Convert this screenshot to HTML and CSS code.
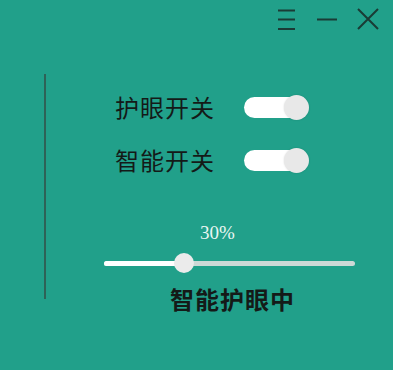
FILE: index.html
```html
<!DOCTYPE html>
<html lang="zh">
<head>
    <meta charset="UTF-8">
    <meta name="viewport" content="width=device-width, initial-scale=1.0">
    <title>护眼</title>
    <link rel="stylesheet" href="styles.css">
</head>
<body>
<div class="window">
    <div class="titlebar">
        <svg class="tb-icon" width="22" height="24" viewBox="0 0 22 24">
            <path d="M2 3.5H19M2 12.5H19M2 22H19" stroke="#1a3b35" stroke-width="2" fill="none"/>
        </svg>
        <svg class="tb-icon" width="22" height="24" viewBox="0 0 22 24">
            <path d="M1 12.5H21" stroke="#1a3b35" stroke-width="2" fill="none"/>
        </svg>
        <svg class="tb-icon" width="24" height="24" viewBox="0 0 24 24">
            <path d="M2 2L22 22M22 2L2 22" stroke="#1a3b35" stroke-width="2" fill="none"/>
        </svg>
    </div>

    <div class="main">
        <div class="divider"></div>
        <div class="content">
            <div class="row">
                <span class="label">护眼开关</span>
                <div class="switch on"><span class="knob"></span></div>
            </div>
            <div class="row">
                <span class="label">智能开关</span>
                <div class="switch on"><span class="knob"></span></div>
            </div>

            <div class="value">30%</div>
            <div class="slider">
                <div class="fill" style="width: 32%"></div>
                <span class="thumb" style="left: 32%"></span>
            </div>
            <div class="status">智能护眼中</div>
        </div>
    </div>
</div>
</body>
</html>
```

FILE: styles.css
```css
body {
    margin: 0;
    background-color: #21a08a;
    font-family: "Noto Sans CJK SC", "Noto Sans", sans-serif;
}

.window {
    width: 393px;
    height: 370px;
    background-color: #21a08a;
}

.titlebar {
    display: flex;
    justify-content: flex-end;
    align-items: flex-start;
    gap: 18px;
    padding: 7px 13px 0 0;
    height: 33px;
}

.tb-icon {
    display: block;
}

.main {
    display: flex;
    padding-left: 44px;
}

.divider {
    width: 2px;
    height: 225px;
    margin-top: 34px;
    background-color: #2e6257;
}

.content {
    margin-left: 58px;
    padding-top: 52px;
    width: 251px;
}

.row {
    display: flex;
    align-items: center;
    height: 30px;
    padding-left: 11px;
}

.row + .row {
    margin-top: 23px;
}

.label {
    font-size: 24px;
    line-height: 30px;
    color: #141a18;
    width: 129px;
    letter-spacing: 1px;
}

.switch {
    position: relative;
    width: 64px;
    height: 21px;
    border-radius: 11px;
    background-color: #ffffff;
}

.knob {
    position: absolute;
    right: -1px;
    top: -2px;
    width: 25px;
    height: 25px;
    border-radius: 50%;
    background-color: #e8e8e8;
    box-shadow: 0 0 2px rgba(0, 0, 0, 0.15);
}

.value {
    margin-top: 48px;
    padding-left: 96px;
    font-family: "Liberation Serif", serif;
    font-size: 19px;
    line-height: 20px;
    color: #eaf6f2;
}

.slider {
    position: relative;
    margin-top: 10px;
    height: 20px;
}

.slider::before {
    content: "";
    position: absolute;
    left: 0;
    right: 0;
    top: 8px;
    height: 5px;
    border-radius: 3px;
    background-color: #cdd9d6;
}

.fill {
    position: absolute;
    left: 0;
    top: 8px;
    height: 5px;
    border-radius: 3px;
    background-color: #ffffff;
}

.thumb {
    position: absolute;
    top: 0;
    width: 20px;
    height: 20px;
    margin-left: -10px;
    border-radius: 50%;
    background-color: #ebebeb;
}

.status {
    margin-top: 11px;
    text-align: center;
    font-size: 24px;
    font-weight: bold;
    line-height: 30px;
    letter-spacing: 1px;
    color: #141a18;
    padding-left: 6px;
}
```
